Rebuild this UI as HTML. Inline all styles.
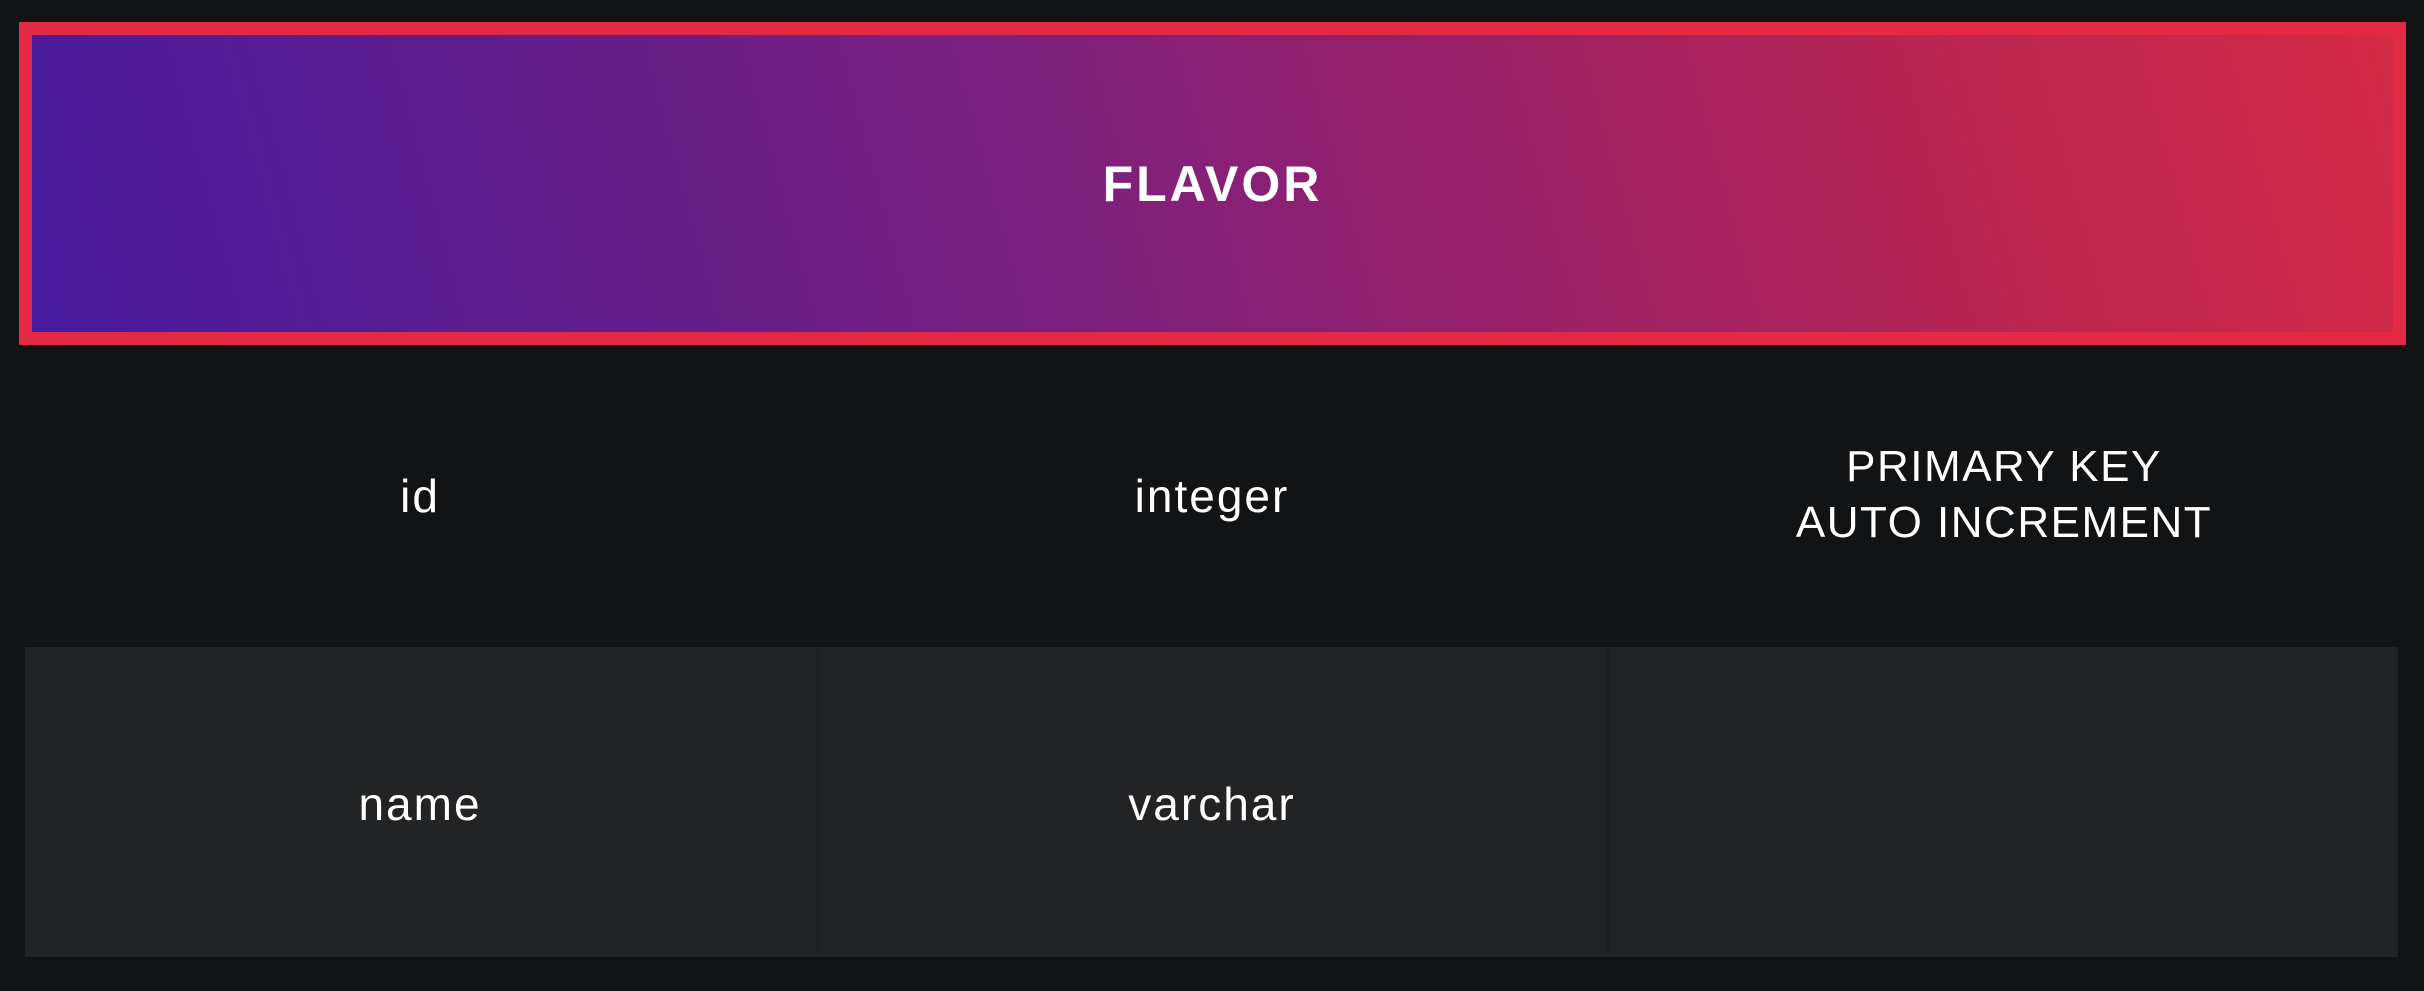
<!DOCTYPE html>
<html><head><meta charset="utf-8"><style>
html,body{margin:0;padding:0;width:2424px;height:991px;background:#121315;overflow:hidden;font-family:"Liberation Sans",sans-serif;color:#fff}
.hdr{position:absolute;left:19px;top:22px;width:2387px;height:323px;box-sizing:border-box;border:13px solid #e32a45;background:linear-gradient(75deg,#471a9e 0%,#5e1d8e 20%,#7a2080 42%,#9a2168 62%,#bb2550 82%,#d42a46 100%);}
.hdr span{position:absolute;left:0;right:0;top:50%;transform:translateY(-50%);text-align:center;font-weight:bold;font-size:50px;letter-spacing:3px}
.row2{position:absolute;left:25px;top:647px;width:2373px;height:310px;background:#222325}
.div{position:absolute;top:647px;height:310px;width:2px;background:#1e1f21}
.t{position:absolute;font-size:46px;text-align:center;width:800px;line-height:56px;letter-spacing:2px}
.c{font-size:44px;letter-spacing:1.5px}
</style></head><body>
<div class="hdr"><span>FLAVOR</span></div>
<div class="row2"></div>
<div class="div" style="left:817px"></div>
<div class="div" style="left:1607px"></div>
<div class="t" style="left:20px;top:468px">id</div>
<div class="t" style="left:812px;top:468px">integer</div>
<div class="t c" style="left:1604px;top:439px">PRIMARY KEY<br>AUTO INCREMENT</div>
<div class="t" style="left:20px;top:776px">name</div>
<div class="t" style="left:812px;top:776px">varchar</div>
</body></html>
